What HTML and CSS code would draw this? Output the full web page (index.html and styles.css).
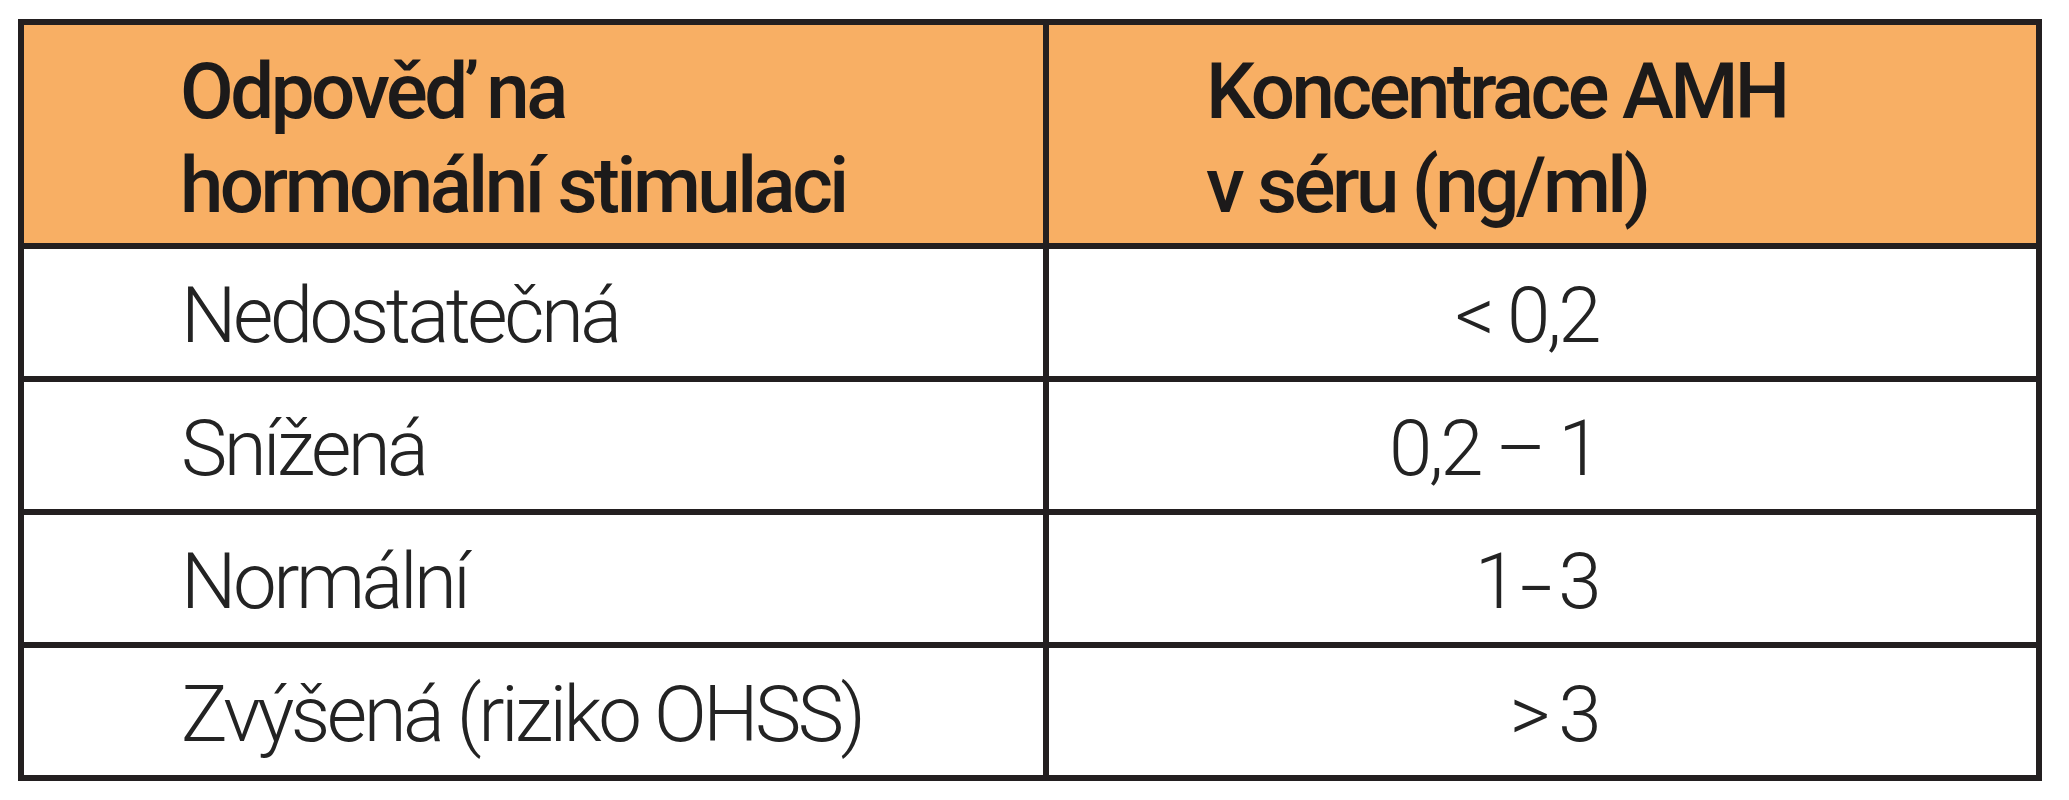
FILE: index.html
```html
<!DOCTYPE html>
<html lang="cs">
<head>
<meta charset="utf-8">
<title>AMH</title>
<link rel="stylesheet" href="styles.css">
</head>
<body>
<div class="amh-table">
  <div class="cell head">Odpověď na<br>hormonální stimulaci</div>
  <div class="cell head head-right">Koncentrace AMH<br>v séru (ng/ml)</div>

  <div class="cell label">Nedostatečná</div>
  <div class="cell value">&lt; 0,2</div>

  <div class="cell label">Snížená</div>
  <div class="cell value">0,2 – 1</div>

  <div class="cell label">Normální</div>
  <div class="cell value value-tight">1 <span class="dash">–</span> 3</div>

  <div class="cell label">Zvýšená (riziko OHSS)</div>
  <div class="cell value value-snug">&gt; 3</div>
</div>
</body>
</html>
```
FILE: styles.css
```css
html, body {
  margin: 0;
  padding: 0;
  background: #ffffff;
}

body {
  padding: 19px 0 0 18px;
  font-family: Roboto, "Liberation Sans", sans-serif;
}

.amh-table {
  display: grid;
  width: max-content;
  grid-template-columns: 1019px 987px;
  grid-template-rows: 218px repeat(4, 127px);
  gap: 6px;
  padding: 6px;
  background: #231f20;
}

.cell {
  background: #ffffff;
  font-size: 78px;
  line-height: 94px;
  letter-spacing: -3.5px;
  color: #232323;
  white-space: nowrap;
}

.head {
  background: #f8af64;
  font-weight: 500;
  color: #1c1a1a;
  padding: 20px 0 0 156px;
}

.head-right {
  padding-left: 157px;
}

.label {
  font-weight: 300;
  padding: 20px 0 0 157px;
}

.value {
  font-weight: 300;
  text-align: right;
  padding: 20px 438px 0 0;
}

.value-tight {
  word-spacing: -12px;
}

.value-tight .dash {
  font-size: 56px;
  font-weight: 400;
  letter-spacing: 0;
}

.value-snug {
  word-spacing: -4px;
}
```
